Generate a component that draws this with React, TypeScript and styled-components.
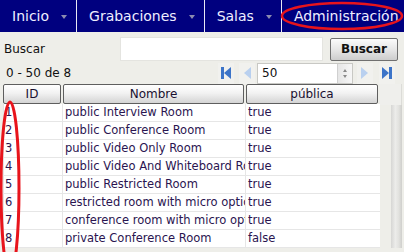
import React from "react";
import styled, { createGlobalStyle } from "styled-components";

const GlobalStyle = createGlobalStyle`
  html, body { margin: 0; padding: 0; }
  body {
    background: #eeeee9;
    font-family: "DejaVu Sans", Verdana, sans-serif;
    width: 404px;
    height: 252px;
    overflow: hidden;
  }
  * { box-sizing: border-box; }
`;

const Page = styled.div`
  position: relative;
  width: 404px;
  height: 252px;
  overflow: hidden;
`;

const NavBar = styled.nav`
  display: flex;
  height: 32px;
  background: #00007f;
`;

const NavItem = styled.div<{ $last?: boolean }>`
  display: flex;
  align-items: center;
  gap: 12px;
  padding: 0 ${(p) => (p.$last ? "0" : "9px")} 0 12px;
  border-right: ${(p) => (p.$last ? "none" : "1px solid #e8e8f4")};
  color: #eeeeff;
  font-size: 14px;
  white-space: nowrap;
`;

const Caret = styled.span`
  width: 0;
  height: 0;
  border-left: 3.5px solid transparent;
  border-right: 3.5px solid transparent;
  border-top: 4px solid #8c8cb0;
  margin-top: 1px;
`;

const SearchRow = styled.div`
  display: flex;
  align-items: center;
  height: 24px;
  margin-top: 5px;
  padding-left: 4px;
`;

const Label = styled.label`
  width: 116px;
  font-size: 12px;
  color: #111;
`;

const SearchInput = styled.div`
  width: 203px;
  height: 24px;
  background: #fff;
  border: 1px solid #e4e4e0;
`;

const SearchButton = styled.button`
  margin-left: 7px;
  width: 68px;
  height: 23px;
  border: 1px solid #707070;
  border-radius: 2px;
  background: linear-gradient(#fbfbfb, #e2e2e2 60%, #cdcdcd);
  font-family: "DejaVu Sans", Verdana, sans-serif;
  font-weight: bold;
  font-size: 12px;
  color: #111;
  padding: 0;
`;

const PagerRow = styled.div`
  display: flex;
  align-items: center;
  height: 22px;
  margin-top: 1px;
`;

const Count = styled.span`
  font-size: 12px;
  color: #111;
  padding-left: 6px;
  width: 212px;
`;

const PagerButton = styled.span<{ $ml: number }>`
  display: flex;
  align-items: center;
  justify-content: center;
  width: 16px;
  height: 21px;
  margin-left: ${(p) => p.$ml}px;
  background: #f1f1ee;
`;

const SizeBox = styled.div`
  display: flex;
  margin-left: 2px;
  width: 96px;
  height: 21px;
  background: #fff;
  border: 1px solid #c8c8c4;
`;

const SizeValue = styled.span`
  flex: 1;
  font-size: 12px;
  color: #111;
  padding-left: 4px;
  line-height: 19px;
`;

const Spinner = styled.span`
  width: 15px;
  display: flex;
  flex-direction: column;
  align-items: center;
  justify-content: center;
  gap: 3px;
  background: linear-gradient(90deg, #e6e6e6, #f6f6f6);
  border-left: 1px solid #d0d0d0;
`;

const SpinArrow = styled.span<{ $up?: boolean }>`
  width: 0;
  height: 0;
  border-left: 2.5px solid transparent;
  border-right: 2.5px solid transparent;
  ${(p) => (p.$up ? "border-bottom: 3px solid #888;" : "border-top: 3px solid #888;")}
`;

const TableArea = styled.div`
  display: flex;
`;

const Grid = styled.div`
  margin-left: 3px;
  width: 377px;
`;

const HeaderRow = styled.div`
  display: grid;
  grid-template-columns: 58px 181px 132px;
  column-gap: 2px;
  height: 20px;
`;

const HeaderCell = styled.div`
  border: 1px solid #5e5e5e;
  border-radius: 2px;
  background: linear-gradient(#ffffff, #f2f2f2 45%, #d4d4d4);
  font-size: 12px;
  color: #1a1030;
  display: flex;
  align-items: center;
  justify-content: center;
`;

const Body = styled.div`
  background: #fff;
  border-left: 1px solid #e4e4e4;
`;

const Row = styled.div`
  display: grid;
  grid-template-columns: 59px 183px 134px;
  height: 18px;
  border-bottom: 1px solid #e6e6e6;
`;

const Cell = styled.div<{ $pad: number; $last?: boolean }>`
  font-size: 11.5px;
  color: #2a1450;
  line-height: 17px;
  white-space: nowrap;
  overflow: hidden;
  padding-left: ${(p) => p.$pad}px;
  border-right: ${(p) => (p.$last ? "none" : "1px solid #e6e6e6")};
`;

const ScrollCol = styled.div`
  width: 24px;
  display: flex;
  flex-direction: column;
`;

const ScrollTop = styled.div`
  height: 21px;
  margin-right: 2px;
  border-right: 1px solid #dcdcd8;
  background: #efefec;
`;

const ScrollTrack = styled.div`
  flex: 1;
  margin-left: 11px;
  width: 11px;
  background: linear-gradient(90deg, #d6d6d4, #ececea 40%, #e2e2df 70%, #cfcfcc);
`;

const Overlay = styled.svg`
  position: absolute;
  left: 0;
  top: 0;
  pointer-events: none;
`;

const rows: [number, string, string][] = [
  [1, "public Interview Room", "true"],
  [2, "public Conference Room", "true"],
  [3, "public Video Only Room", "true"],
  [4, "public Video And Whiteboard Room", "true"],
  [5, "public Restricted Room", "true"],
  [6, "restricted room with micro options", "true"],
  [7, "conference room with micro options", "true"],
  [8, "private Conference Room", "false"],
];

const FirstIcon = () => (
  <svg width="12" height="14" viewBox="0 0 12 14">
    <rect x="1" y="1" width="3" height="12" fill="#3c74c8" />
    <path d="M11 1 L4 7 L11 13 Z" fill="#3c74c8" />
  </svg>
);
const PrevIcon = () => (
  <svg width="12" height="14" viewBox="0 0 12 14">
    <path d="M10 1 L3 7 L10 13 Z" fill="#b9d0ef" />
  </svg>
);
const NextIcon = () => (
  <svg width="12" height="14" viewBox="0 0 12 14">
    <path d="M2 1 L9 7 L2 13 Z" fill="#b9d0ef" />
  </svg>
);
const LastIcon = () => (
  <svg width="12" height="14" viewBox="0 0 12 14">
    <path d="M1 1 L8 7 L1 13 Z" fill="#3c74c8" />
    <rect x="8" y="1" width="3" height="12" fill="#3c74c8" />
  </svg>
);

export default function App() {
  return (
    <Page>
      <GlobalStyle />
      <NavBar>
        <NavItem>
          Inicio <Caret />
        </NavItem>
        <NavItem>
          Grabaciones <Caret />
        </NavItem>
        <NavItem>
          Salas <Caret />
        </NavItem>
        <NavItem $last>Administración</NavItem>
      </NavBar>
      <SearchRow>
        <Label>Buscar</Label>
        <SearchInput />
        <SearchButton>Buscar</SearchButton>
      </SearchRow>
      <PagerRow>
        <Count>0 - 50 de 8</Count>
        <PagerButton $ml={6}>
          <FirstIcon />
        </PagerButton>
        <PagerButton $ml={5}>
          <PrevIcon />
        </PagerButton>
        <SizeBox>
          <SizeValue>50</SizeValue>
          <Spinner>
            <SpinArrow $up />
            <SpinArrow />
          </Spinner>
        </SizeBox>
        <PagerButton $ml={4}>
          <NextIcon />
        </PagerButton>
        <PagerButton $ml={6}>
          <LastIcon />
        </PagerButton>
      </PagerRow>
      <TableArea>
        <Grid>
          <HeaderRow>
            <HeaderCell>ID</HeaderCell>
            <HeaderCell>Nombre</HeaderCell>
            <HeaderCell>pública</HeaderCell>
          </HeaderRow>
          <Body>
            {rows.map(([id, name, pub]) => (
              <Row key={id}>
                <Cell $pad={1}>{id}</Cell>
                <Cell $pad={2}>{name}</Cell>
                <Cell $pad={2} $last>
                  {pub}
                </Cell>
              </Row>
            ))}
          </Body>
        </Grid>
        <ScrollCol>
          <ScrollTop />
          <ScrollTrack />
        </ScrollCol>
      </TableArea>
      <Overlay width="404" height="252" viewBox="0 0 404 252">
        <ellipse cx="342" cy="16" rx="60" ry="13" fill="none" stroke="#e8141c" strokeWidth="2.5" />
        <ellipse cx="10" cy="188" rx="9" ry="86" fill="none" stroke="#e8141c" strokeWidth="3" />
      </Overlay>
    </Page>
  );
}
